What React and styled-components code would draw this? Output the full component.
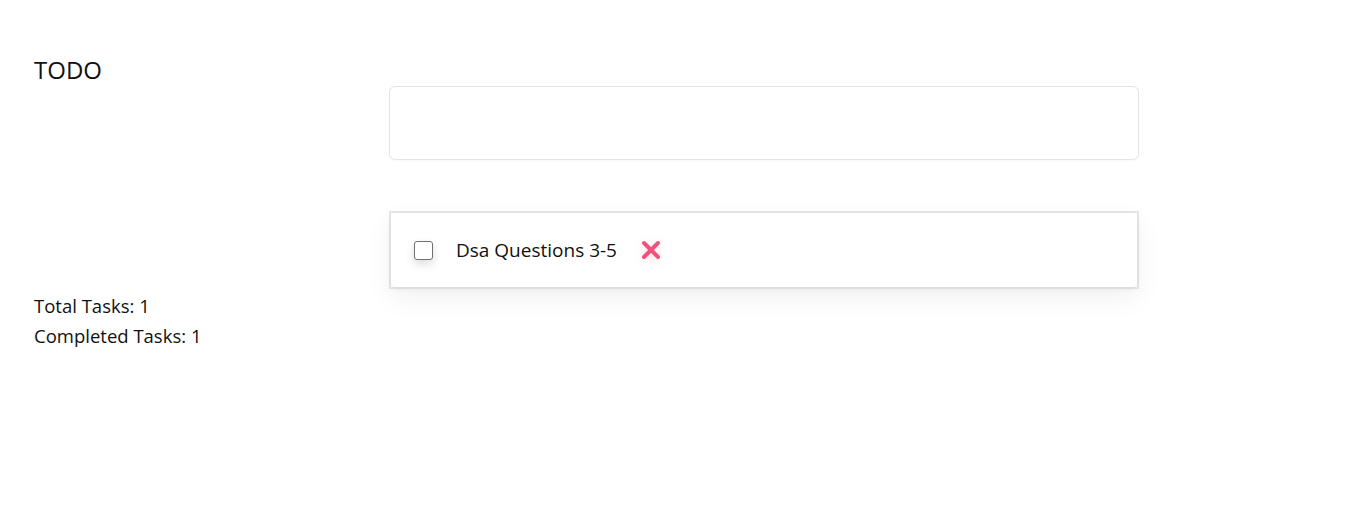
import React from "react";
import styled, { createGlobalStyle } from "styled-components";

const Global = createGlobalStyle`
  html, body { margin: 0; padding: 0; background: #fff; }
  body { font-family: "Open Sans", "Noto Sans", sans-serif; color: #111; }
`;

const Page = styled.div`
  display: flex;
  padding: 54px 34px;
`;

const Side = styled.div`
  width: 355px;
  flex: none;
  display: flex;
  flex-direction: column;
`;

const Title = styled.h1`
  margin: 0;
  font-size: 24px;
  font-weight: 400;
  line-height: 32px;
`;

const Stats = styled.div`
  margin-top: 205px;
  font-size: 18.5px;
  line-height: 30px;
`;

const Main = styled.div`
  width: 750px;
  flex: none;
  display: flex;
  flex-direction: column;
  padding-top: 32px;
  gap: 51px;
`;

const Input = styled.input`
  box-sizing: border-box;
  width: 100%;
  height: 74px;
  border: 1px solid #e4e4e4;
  border-radius: 6px;
  outline: none;
  font: inherit;
  padding: 0 20px;
  box-shadow: 0 1px 2px rgba(0, 0, 0, 0.03);
`;

const List = styled.ul`
  list-style: none;
  margin: 0;
  padding: 0;
  border: 2px solid #e6e6e6;
  box-shadow: 0 10px 24px rgba(0, 0, 0, 0.05);
`;

const Item = styled.li`
  height: 74px;
  display: flex;
  align-items: center;
  padding: 0 23px;
  gap: 23px;
  border-radius: 0 0 6px 6px;
  background: #fff;
  box-shadow: 0 2px 6px rgba(0, 0, 0, 0.06);
  font-size: 19px;
`;

const Check = styled.span`
  box-sizing: border-box;
  width: 19px;
  height: 19px;
  border: 1.5px solid #707070;
  border-radius: 3px;
  background: #fff;
  box-shadow: 0 4px 10px rgba(0, 0, 0, 0.14);
  flex: none;
`;

const Label = styled.span`
  line-height: 24px;
`;

const Remove = styled.button`
  border: none;
  background: none;
  padding: 0;
  display: flex;
  cursor: pointer;
  filter: drop-shadow(0 2px 5px rgba(240, 80, 122, 0.2));
`;

export default function App() {
  return (
    <>
      <Global />
      <Page>
        <Side>
          <Title>TODO</Title>
          <Stats>
            <div>Total Tasks: 1</div>
            <div>Completed Tasks: 1</div>
          </Stats>
        </Side>
        <Main>
          <Input />
          <List>
            <Item>
              <Check />
              <Label>Dsa Questions 3-5</Label>
              <Remove aria-label="delete">
                <svg width="22" height="22" viewBox="0 0 22 22">
                  <path
                    d="M4 4 L18 18 M18 4 L4 18"
                    stroke="#f2517b"
                    strokeWidth="4"
                    strokeLinecap="round"
                  />
                </svg>
              </Remove>
            </Item>
          </List>
        </Main>
      </Page>
    </>
  );
}
